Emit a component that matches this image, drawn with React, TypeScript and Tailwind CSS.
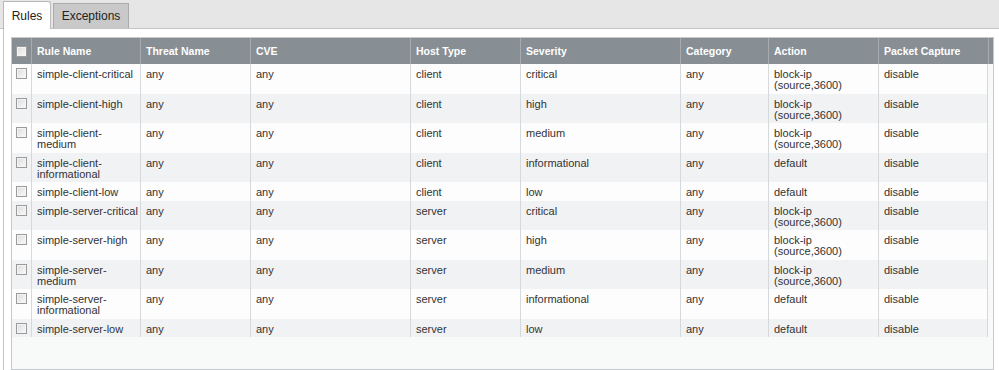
import React from 'react';

type Rule = {
  name: string[];
  host: string;
  severity: string;
  action: string[];
};

const BLOCK = ['block-ip', '(source,3600)'];

const rules: Rule[] = [
  { name: ['simple-client-critical'], host: 'client', severity: 'critical', action: BLOCK },
  { name: ['simple-client-high'], host: 'client', severity: 'high', action: BLOCK },
  { name: ['simple-client-', 'medium'], host: 'client', severity: 'medium', action: BLOCK },
  { name: ['simple-client-', 'informational'], host: 'client', severity: 'informational', action: ['default'] },
  { name: ['simple-client-low'], host: 'client', severity: 'low', action: ['default'] },
  { name: ['simple-server-critical'], host: 'server', severity: 'critical', action: BLOCK },
  { name: ['simple-server-high'], host: 'server', severity: 'high', action: BLOCK },
  { name: ['simple-server-', 'medium'], host: 'server', severity: 'medium', action: BLOCK },
  { name: ['simple-server-', 'informational'], host: 'server', severity: 'informational', action: ['default'] },
  { name: ['simple-server-low'], host: 'server', severity: 'low', action: ['default'] },
];

const headers = ['Rule Name', 'Threat Name', 'CVE', 'Host Type', 'Severity', 'Category', 'Action', 'Packet Capture'];

const Checkbox: React.FC = () => (
  <span className="block w-[11px] h-[11px] border border-[#9b9b9b] bg-gradient-to-br from-[#dcdcdc] to-[#fbfbfb] shadow-[inset_0_0_0_1px_#f4f4f4]" />
);

const Lines: React.FC<{ lines: string[] }> = ({ lines }) => (
  <>
    {lines.map((l, i) => (
      <div key={i} className="whitespace-nowrap">{l}</div>
    ))}
  </>
);

const cell = 'border-l border-[#d6d9dc] pl-[5px] pt-[5px] pb-[2.5px]';

const App: React.FC = () => {
  return (
    <div className="w-[999px] h-[370px] bg-white flex flex-col overflow-hidden font-['Liberation_Sans',Arial,sans-serif]">
      {/* Tabs */}
      <div className="h-[29px] shrink-0 flex items-end bg-[#e6e6e6] border-b border-[#c4c4c4] pl-[3px]">
        <div className="-mb-px h-[28px] w-[48px] bg-white border-l border-t border-r border-[#b9b9b9] rounded-tr-[3px] flex items-center justify-center text-[12px] text-[#222]">
          Rules
        </div>
        <div className="ml-[2px] h-[25px] w-[76px] bg-[#c9c9c9] border border-b-0 border-[#ababab] flex items-center justify-center text-[12px] text-[#222]">
          Exceptions
        </div>
      </div>

      {/* Panel */}
      <div className="flex-1 min-h-0 ml-[3px] border-l border-[#c4c4c4] pl-[7px] pt-[8px] flex flex-col">
        <div className="w-[983px] flex-1 min-h-0 border border-[#c6cacd] bg-[#f8f9f9] overflow-hidden">
          {/* Header */}
          <div className="grid grid-cols-[19px_109px_110px_160px_110px_160px_88px_110px_110px_5px] h-[26px] bg-[#878e94] text-white font-bold text-[10.5px]">
            <div className="flex items-center justify-center">
              <Checkbox />
            </div>
            {headers.map(h => (
              <div key={h} className="border-l border-[#a6abb0] pl-[5px] pt-[2px] flex items-center whitespace-nowrap">
                {h}
              </div>
            ))}
            <div className="border-l border-[#a6abb0]" />
          </div>

          {/* Rows */}
          {rules.map((r, i) => (
            <div
              key={r.name.join('')}
              className={`grid grid-cols-[19px_109px_110px_160px_110px_160px_88px_110px_110px] w-[976px] text-[11px] leading-[11px] text-[#333] ${
                i % 2 === 0 ? 'bg-[#fdfdfd]' : 'bg-[#f1f2f3]'
              }`}
            >
              <div className="flex justify-center pt-[4px]">
                <Checkbox />
              </div>
              <div className={cell}><Lines lines={r.name} /></div>
              <div className={cell}>any</div>
              <div className={cell}>any</div>
              <div className={cell}>{r.host}</div>
              <div className={cell}>{r.severity}</div>
              <div className={cell}>any</div>
              <div className={cell}><Lines lines={r.action} /></div>
              <div className={`${cell} border-r`}>disable</div>
            </div>
          ))}
        </div>
      </div>
    </div>
  );
};

export default App;
